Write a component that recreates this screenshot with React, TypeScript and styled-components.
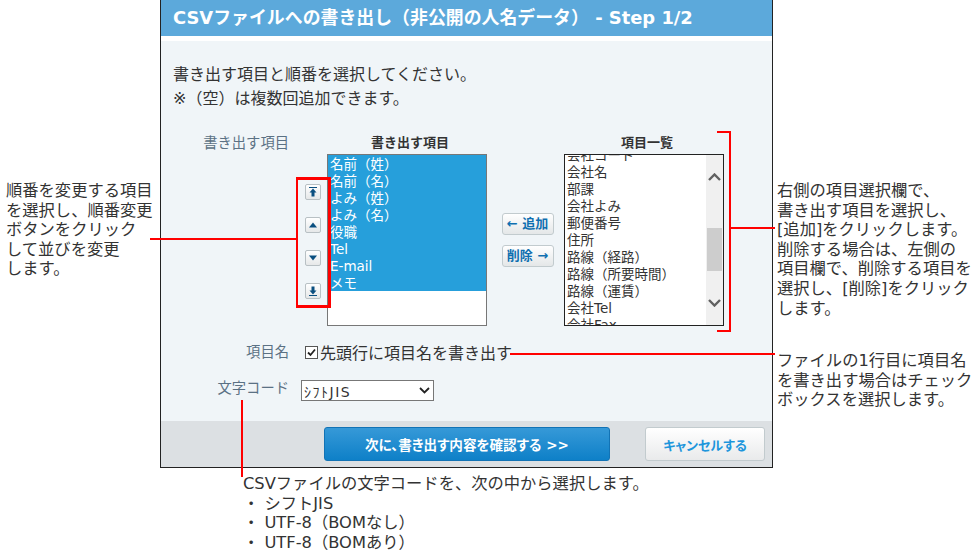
import React from "react";
import styled, { createGlobalStyle } from "styled-components";

const GlobalStyle = createGlobalStyle`
  html, body {
    margin: 0;
    padding: 0;
    background: #fff;
    overflow: hidden;
  }
  body {
    font-family: "DejaVu Sans", "Noto Sans CJK JP", sans-serif;
    font-size: 14px;
    color: #333;
  }
`;

const Stage = styled.div`
  position: relative;
  width: 980px;
  height: 558px;
  display: grid;
  grid-template-columns: 160px 613px 1fr;
  grid-template-rows: 468px 1fr;
`;

const Note = styled.div`
  font-size: 16.3px;
  line-height: 19.6px;
  color: #333;
  white-space: pre-line;
`;

const LeftNote = styled(Note)`
  padding: 181px 0 0 6px;
`;

const RightColumn = styled.div`
  display: flex;
  flex-direction: column;
  gap: 33px;
  padding: 181px 0 0 4px;
`;

const BottomNote = styled(Note)`
  grid-column: 2 / 4;
  padding: 6px 0 0 83px;
`;

const Dialog = styled.div`
  border: 1px solid #222;
  border-top: 0;
  display: flex;
  flex-direction: column;
  background: #f0f5f8;
`;

const Header = styled.div`
  height: 36px;
  line-height: 36px;
  padding-left: 12px;
  background: #5ca9db;
  color: #fff;
  font-size: 17.9px;
  font-weight: bold;
  border-bottom: 5px solid #fff;
`;

const Body = styled.div`
  flex: 1;
  padding: 22px 0 0 12px;
`;

const Intro = styled.div`
  font-size: 16px;
  line-height: 24px;
  color: #333;
`;

const FormRow = styled.div`
  display: flex;
`;

const ListRow = styled(FormRow)`
  margin-top: 22px;
`;

const FieldLabel = styled.div`
  width: 116px;
  text-align: right;
  color: #5b7184;
  font-size: 14.3px;
  line-height: 20px;
`;

const OrderButtons = styled.div`
  display: flex;
  flex-direction: column;
  gap: 17px;
  width: 22px;
  margin: 51px 0 0 16px;
`;

const SquareButton = styled.button`
  width: 16px;
  height: 16px;
  padding: 0;
  border: 1px solid #b8c0c4;
  border-radius: 2px;
  background: linear-gradient(#fff, #e6e8e9);
  display: flex;
  align-items: center;
  justify-content: center;
`;

const ListColumn = styled.div`
  width: 160px;
`;

const ColumnTitle = styled.div`
  height: 21px;
  line-height: 20px;
  padding-left: 6px;
  text-align: center;
  font-size: 13px;
  font-weight: bold;
  color: #333;
`;

const ListBox = styled.div<{ $dark?: boolean }>`
  position: relative;
  height: 170px;
  border: 1px solid ${(p) => (p.$dark ? "#222" : "#777")};
  background: #fff;
  overflow: hidden;
  font-size: 13.5px;
  line-height: 18px;
`;

const OptionRow = styled.div<{ $selected?: boolean }>`
  height: 17px;
  padding-left: 2px;
  white-space: nowrap;
  color: ${(p) => (p.$selected ? "#fff" : "#333")};
  background: ${(p) => (p.$selected ? "#269fdb" : "transparent")};
`;

const ScrolledOptions = styled.div`
  margin-top: -9px;
`;

const ScrollTrack = styled.div`
  position: absolute;
  top: 0;
  right: 0;
  bottom: 0;
  width: 17px;
  background: #f0f0f0;
`;

const ScrollThumb = styled.div`
  position: absolute;
  top: 73px;
  left: 1px;
  right: 1px;
  height: 43px;
  background: #cdcdcd;
`;

const ScrollArrow = styled.svg<{ $down?: boolean }>`
  position: absolute;
  left: 2px;
  ${(p) => (p.$down ? "bottom: 18px;" : "top: 18px;")}
`;

const MoveButtons = styled.div`
  width: 77px;
  box-sizing: border-box;
  display: flex;
  flex-direction: column;
  align-items: center;
  gap: 10px;
  padding: 80px 0 0 4px;
`;

const MoveButton = styled.button`
  width: 52px;
  height: 22px;
  padding: 0;
  border: 1px solid #c2cbce;
  border-radius: 3px;
  background: linear-gradient(#fff, #e4e7e8);
  color: #0f6fb0;
  font-family: inherit;
  font-size: 13px;
  font-weight: bold;
  line-height: 20px;
  white-space: nowrap;
`;

const CheckRow = styled(FormRow)`
  margin-top: 16px;
  height: 20px;
  align-items: center;
`;

const CheckLabel = styled.label`
  display: flex;
  align-items: center;
  margin-left: 16px;
  color: #333;
  font-size: 16px;
`;

const CheckBox = styled.span`
  width: 11px;
  height: 11px;
  border: 1px solid #555;
  background: #fff;
  margin-right: 2px;
  display: flex;
`;

const SelectRow = styled(FormRow)`
  margin-top: 16px;
`;

const CodeSelect = styled.div`
  height: 19px;
  margin: 2px 0 0 12px;
  border: 1px solid #777;
  background: #fff;
  display: flex;
  align-items: center;
  justify-content: space-between;
  padding: 0 3px 0 2px;
  width: 126px;
  font-size: 14px;
  letter-spacing: 1.5px;
  color: #333;
`;

const Footer = styled.div`
  height: 46px;
  background: #dce0e3;
  display: flex;
  align-items: flex-start;
  padding: 6px 0 0 163px;
  gap: 35px;
  box-sizing: border-box;
`;

const PrimaryButton = styled.button`
  width: 286px;
  height: 34px;
  border: 1px solid #1273b5;
  border-radius: 3px;
  background: linear-gradient(#3699d8, #0e80c8);
  color: #fff;
  font-family: inherit;
  font-size: 13.6px;
  font-weight: bold;
  font-feature-settings: "palt";
`;

const CancelButton = styled.button`
  width: 120px;
  height: 34px;
  border: 1px solid #c2cbce;
  border-radius: 3px;
  background: linear-gradient(#fff, #e9eaeb);
  color: #1e96dc;
  font-family: inherit;
  font-size: 13px;
  font-weight: bold;
  font-feature-settings: "palt";
`;

const RedBox = styled.div`
  position: absolute;
  left: 296px;
  top: 177px;
  width: 30px;
  height: 125px;
  border: 3px solid #f00;
  border-left-width: 2px;
`;

const RedLine = styled.div`
  position: absolute;
  background: #f00;
`;

const LeftLead = styled(RedLine)`
  left: 150px;
  top: 238px;
  width: 146px;
  height: 2px;
`;

const Bracket = styled.div`
  position: absolute;
  left: 717px;
  top: 131px;
  width: 12px;
  height: 197px;
  border: 2px solid #f00;
  border-left: 0;
`;

const BracketLead = styled(RedLine)`
  left: 731px;
  top: 227px;
  width: 44px;
  height: 2px;
`;

const CheckLead = styled(RedLine)`
  left: 510px;
  top: 353px;
  width: 265px;
  height: 2px;
`;

const CodeLead = styled(RedLine)`
  left: 241px;
  top: 400px;
  width: 2px;
  height: 77px;
`;

const Arrow = ({ kind }: { kind: "top" | "up" | "down" | "bottom" }) => {
  const flip = kind === "down" || kind === "bottom";
  const edge = kind === "top" || kind === "bottom";
  return (
    <svg width="10" height="10" viewBox="0 0 10 10" transform={flip ? "rotate(180)" : undefined}>
      {edge && <rect x="1" y="0" width="8" height="1" fill="#0b4f80" />}
      <path d={edge ? "M5 1.5 L8.5 5.5 H6.5 V9.5 H3.5 V5.5 H1.5 Z" : "M5 2.5 L9 7.5 H1 Z"} fill="#0b4f80" />
    </svg>
  );
};

const leftItems = ["名前（姓）", "名前（名）", "よみ（姓）", "よみ（名）", "役職", "Tel", "E-mail", "メモ"];
const rightItems = [
  "会社コード",
  "会社名",
  "部課",
  "会社よみ",
  "郵便番号",
  "住所",
  "路線（経路）",
  "路線（所要時間）",
  "路線（運賃）",
  "会社Tel",
  "会社Fax",
];

export default function App() {
  return (
    <Stage>
      <GlobalStyle />
      <LeftNote>
        {"順番を変更する項目\nを選択し、順番変更\nボタンをクリック\nして並びを変更\nします。"}
      </LeftNote>
      <Dialog>
        <Header>CSVファイルへの書き出し（非公開の人名データ） - Step 1/2</Header>
        <Body>
          <Intro>
            書き出す項目と順番を選択してください。
            <br />
            ※（空）は複数回追加できます。
          </Intro>
          <ListRow>
            <FieldLabel>書き出す項目</FieldLabel>
            <OrderButtons>
              <SquareButton><Arrow kind="top" /></SquareButton>
              <SquareButton><Arrow kind="up" /></SquareButton>
              <SquareButton><Arrow kind="down" /></SquareButton>
              <SquareButton><Arrow kind="bottom" /></SquareButton>
            </OrderButtons>
            <ListColumn>
              <ColumnTitle>書き出す項目</ColumnTitle>
              <ListBox>
                {leftItems.map((item) => (
                  <OptionRow key={item} $selected>{item}</OptionRow>
                ))}
              </ListBox>
            </ListColumn>
            <MoveButtons>
              <MoveButton>← 追加</MoveButton>
              <MoveButton>削除 →</MoveButton>
            </MoveButtons>
            <ListColumn>
              <ColumnTitle>項目一覧</ColumnTitle>
              <ListBox $dark>
                <ScrolledOptions>
                  {rightItems.map((item) => (
                    <OptionRow key={item}>{item}</OptionRow>
                  ))}
                </ScrolledOptions>
                <ScrollTrack>
                  <ScrollArrow width="13" height="8" viewBox="0 0 13 8">
                    <path d="M1 7 L6.5 1.5 L12 7" fill="none" stroke="#606060" strokeWidth="2.4" />
                  </ScrollArrow>
                  <ScrollThumb />
                  <ScrollArrow $down width="13" height="8" viewBox="0 0 13 8">
                    <path d="M1 1 L6.5 6.5 L12 1" fill="none" stroke="#606060" strokeWidth="2.4" />
                  </ScrollArrow>
                </ScrollTrack>
              </ListBox>
            </ListColumn>
          </ListRow>
          <CheckRow>
            <FieldLabel>項目名</FieldLabel>
            <CheckLabel>
              <CheckBox>
                <svg width="11" height="11" viewBox="0 0 11 11">
                  <path d="M2 5.5 L4.5 8 L9 2.5" fill="none" stroke="#222" strokeWidth="1.8" />
                </svg>
              </CheckBox>
              先頭行に項目名を書き出す
            </CheckLabel>
          </CheckRow>
          <SelectRow>
            <FieldLabel>文字コード</FieldLabel>
            <CodeSelect>
              ｼﾌﾄJIS
              <svg width="11" height="7" viewBox="0 0 11 7">
                <path d="M1 1 L5.5 5.5 L10 1" fill="none" stroke="#222" strokeWidth="1.8" />
              </svg>
            </CodeSelect>
          </SelectRow>
        </Body>
        <Footer>
          <PrimaryButton>次に、書き出す内容を確認する &gt;&gt;</PrimaryButton>
          <CancelButton>キャンセルする</CancelButton>
        </Footer>
      </Dialog>
      <RightColumn>
        <Note>
          {"右側の項目選択欄で、\n書き出す項目を選択し、\n[追加]をクリックします。\n削除する場合は、左側の\n項目欄で、削除する項目を\n選択し、[削除]をクリック\nします。"}
        </Note>
        <Note>{"ファイルの1行目に項目名\nを書き出す場合はチェック\nボックスを選択します。"}</Note>
      </RightColumn>
      <BottomNote>
        {"CSVファイルの文字コードを、次の中から選択します。\n・ シフトJIS\n・ UTF-8（BOMなし）\n・ UTF-8（BOMあり）"}
      </BottomNote>
      <RedBox />
      <LeftLead />
      <Bracket />
      <BracketLead />
      <CheckLead />
      <CodeLead />
    </Stage>
  );
}
